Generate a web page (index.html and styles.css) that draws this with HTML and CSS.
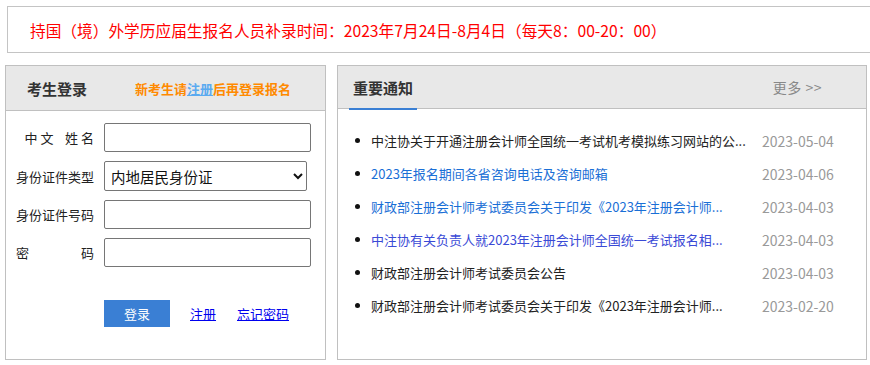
FILE: index.html
```html
<!DOCTYPE html>
<html lang="zh-CN">
<head>
<meta charset="utf-8">
<title>考生登录</title>
<link rel="stylesheet" href="styles.css">
</head>
<body>
<div class="banner">持国（境）外学历应届生报名人员补录时间：2023年7月24日-8月4日（每天8：00-20：00）</div>
<div class="main">
  <section class="panel login">
    <div class="panel-head">
      <h2 class="panel-title">考生登录</h2>
      <span class="reg-tip">新考生请<a href="#" class="reg-link">注册</a>后再登录报名</span>
    </div>
    <form class="login-form">
      <div class="row">
        <label class="lbl lbl-name">中 文    姓 名</label>
        <input class="field" type="text">
      </div>
      <div class="row">
        <label class="lbl">身份证件类型</label>
        <select class="field select">
          <option>内地居民身份证</option>
        </select>
      </div>
      <div class="row">
        <label class="lbl">身份证件号码</label>
        <input class="field" type="text">
      </div>
      <div class="row">
        <label class="lbl lbl-split"><span>密</span><span>码</span></label>
        <input class="field" type="password">
      </div>
      <div class="actions">
        <button type="button" class="btn">登录</button>
        <a href="#" class="link">注册</a>
        <a href="#" class="link">忘记密码</a>
      </div>
    </form>
  </section>
  <section class="panel notice">
    <div class="panel-head notice-head">
      <h2 class="notice-title">重要通知</h2>
      <a href="#" class="more">更多 &gt;&gt;</a>
    </div>
    <ul class="news">
      <li class="item"><a href="#" class="t dark">中注协关于开通注册会计师全国统一考试机考模拟练习网站的公...</a><span class="date">2023-05-04</span></li>
      <li class="item"><a href="#" class="t blue">2023年报名期间各省咨询电话及咨询邮箱</a><span class="date">2023-04-06</span></li>
      <li class="item"><a href="#" class="t blue">财政部注册会计师考试委员会关于印发《2023年注册会计师...</a><span class="date">2023-04-03</span></li>
      <li class="item"><a href="#" class="t violet">中注协有关负责人就2023年注册会计师全国统一考试报名相...</a><span class="date">2023-04-03</span></li>
      <li class="item"><a href="#" class="t dark">财政部注册会计师考试委员会公告</a><span class="date">2023-04-03</span></li>
      <li class="item"><a href="#" class="t dark">财政部注册会计师考试委员会关于印发《2023年注册会计师...</a><span class="date">2023-02-20</span></li>
    </ul>
  </section>
</div>
</body>
</html>
```
FILE: styles.css
```css
html, body {
  margin: 0;
  padding: 0;
  overflow: hidden;
  background: #fff;
}
body {
  font-family: "Noto Sans CJK SC", "Microsoft YaHei", sans-serif;
  color: #222;
  width: 870px;
}
.banner {
  box-sizing: border-box;
  margin: 6px 0 0 7px;
  width: 880px;
  height: 47px;
  border: 1px solid #c4c4c4;
  padding: 2px 0 0 22px;
  display: flex;
  align-items: center;
  color: #ff0000;
  font-size: 15.7px;
  white-space: nowrap;
}
.main {
  display: flex;
  gap: 11px;
  margin: 12px 0 0 5px;
}
.panel {
  box-sizing: border-box;
  height: 295px;
  border: 1px solid #c0c0c0;
}
.login { width: 321px; }
.notice { width: 530px; }
.panel-head {
  height: 44px;
  background: #e8e8e8;
  border-bottom: 1px solid #c0c0c0;
  display: flex;
  align-items: center;
  padding-left: 21px;
}
.panel-title {
  margin: 0;
  font-size: 15px;
  font-weight: bold;
  color: #333;
  width: 108px;
}
.reg-tip {
  font-size: 13px;
  font-weight: bold;
  color: #ff8a00;
}
.reg-link {
  color: #5aaaf0;
  text-decoration: underline;
}
.login-form {
  padding: 12px 0 0 10px;
  display: flex;
  flex-direction: column;
  gap: 9px;
}
.row {
  display: flex;
  align-items: center;
  gap: 10px;
}
.lbl {
  width: 78px;
  text-align: right;
  font-size: 13px;
  color: #222;
  white-space: pre;
}
.lbl-split {
  display: flex;
  justify-content: space-between;
}
.field {
  box-sizing: border-box;
  width: 207px;
  height: 29px;
  border: 1px solid #767676;
  border-radius: 2px;
  font-size: 14px;
  font-family: inherit;
  margin: 0;
}
.select {
  width: 203px;
  height: 30px;
  font-size: 14.5px;
  color: #111;
  background: #fff;
  padding-left: 2px;
}
.actions {
  display: flex;
  align-items: center;
  margin: 24px 0 0 88px;
  font-size: 13px;
}
.btn {
  width: 66px;
  height: 27px;
  border: 0;
  background: #3a7fd4;
  color: #fff;
  font-size: 13px;
  font-family: inherit;
  padding: 0;
  margin-right: 20px;
}
.link {
  color: #0000ee;
  text-decoration: underline;
  margin-right: 21px;
}
.notice-head {
  height: 42px;
  padding: 0 44px 0 11px;
  justify-content: space-between;
  align-items: stretch;
}
.notice-title {
  margin: 0 0 -1px;
  padding: 0 4px;
  font-size: 15px;
  font-weight: bold;
  color: #333;
  display: flex;
  align-items: center;
  border-bottom: 2px solid #3a7fd4;
  box-sizing: border-box;
  height: 44px;
}
.more {
  align-self: center;
  color: #888;
  font-size: 14px;
  text-decoration: none;
  letter-spacing: 0.5px;
}
.news {
  list-style: none;
  margin: 0;
  padding: 15px 0 0 17px;
}
.item {
  display: flex;
  align-items: center;
  height: 33px;
  font-size: 13px;
  white-space: nowrap;
}
.item::before {
  content: "";
  width: 5px;
  height: 5px;
  border-radius: 50%;
  background: #111;
  margin-right: 11px;
  flex: none;
}
.t {
  text-decoration: none;
  width: 391px;
  overflow: hidden;
  flex: none;
}
.dark { color: #222; }
.blue { color: #1a6fd6; }
.violet { color: #3a4ad6; }
.date {
  color: #999;
  font-size: 14px;
}
```
